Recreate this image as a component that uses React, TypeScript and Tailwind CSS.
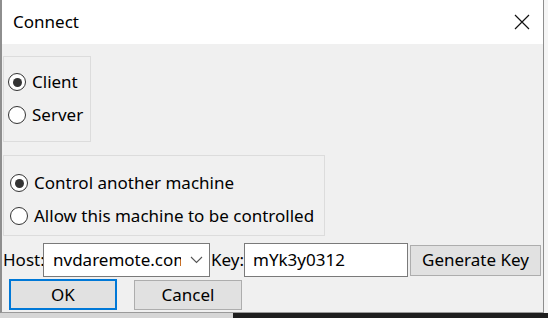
import { useState } from 'react'

function Radio({ checked, label }: { checked: boolean; label: string }) {
  return (
    <div className="flex items-center h-[24px] gap-[6px]">
      <span className="w-[18px] h-[18px] rounded-full border border-[#333333] bg-white flex items-center justify-center shrink-0">
        {checked && <span className="w-[9px] h-[9px] rounded-full bg-[#333333]" />}
      </span>
      <span className="whitespace-nowrap">{label}</span>
    </div>
  )
}

export default function App() {
  const [host] = useState('nvdaremote.com')
  const [key] = useState('mYk3y0312')

  return (
    <div className="w-[548px] h-[318px] flex flex-col overflow-hidden font-['Noto_Sans',sans-serif] text-[17px] text-black">
      <div className="flex h-[313px]">
        <div className="w-[544px] flex flex-col border-l-2 border-l-[#8e8e8e] border-r border-r-[#8e8e8e] border-b border-b-[#9a9a9a]">
          {/* title bar */}
          <div className="h-[44px] bg-white flex items-center justify-between pl-[11px] pr-[13px] shrink-0">
            <span className="text-[17px]">Connect</span>
            <svg width="16" height="16" viewBox="0 0 16 16">
              <path d="M1 1 L15 15 M15 1 L1 15" stroke="#111" strokeWidth="1.2" />
            </svg>
          </div>

          {/* body */}
          <div className="flex-1 bg-[#f0f0f0] pl-[1px] pt-[12px] flex flex-col">
            <div className="w-[88px] h-[86px] border border-[#dcdcdc] pl-[4px] pt-[13px] flex flex-col gap-[9px]">
              <Radio checked label="Client" />
              <Radio checked={false} label="Server" />
            </div>

            <div className="mt-[13px] w-[322px] h-[81px] border border-[#dcdcdc] pl-[6px] pt-[15px] flex flex-col gap-[9px]">
              <Radio checked label="Control another machine" />
              <Radio checked={false} label="Allow this machine to be controlled" />
            </div>

            <div className="mt-[7px] flex items-center h-[34px]">
              <span className="w-[40px] shrink-0">Host:</span>
              <div className="w-[167px] h-[34px] bg-white border border-[#7a7a7a] flex items-center pl-[9px] shrink-0">
                <span className="w-[128px] overflow-hidden whitespace-nowrap shrink-0">{host}</span>
                <svg width="13" height="8" viewBox="0 0 13 8" className="ml-[9px] shrink-0">
                  <path d="M1 1 L6.5 6.5 L12 1" stroke="#555" strokeWidth="1.1" fill="none" />
                </svg>
              </div>
              <span className="w-[34px] shrink-0 pl-[1px]">Key:</span>
              <div className="w-[164px] h-[34px] bg-white border border-[#7a7a7a] flex items-center pl-[8px] shrink-0">
                <span className="whitespace-nowrap">{key}</span>
              </div>
              <button className="ml-[2px] w-[131px] h-[31px] bg-[#e1e1e1] border border-[#adadad] flex items-center justify-center shrink-0">
                Generate Key
              </button>
            </div>

            <div className="mt-[2px] flex items-start">
              <button className="ml-[6px] w-[108px] h-[31px] bg-[#e1e1e1] border-2 border-[#0078d7] flex items-center justify-center">
                OK
              </button>
              <button className="ml-[17px] mt-[1px] w-[108px] h-[30px] bg-[#e1e1e1] border border-[#adadad] flex items-center justify-center">
                Cancel
              </button>
            </div>
          </div>
        </div>
        <div className="flex-1 bg-[#f5f5f5]" />
      </div>
      <div className="flex flex-1">
        <div className="w-[233px] bg-[#d6d6d6]" />
        <div className="flex-1 bg-[#1e1e1e]" />
      </div>
    </div>
  )
}
